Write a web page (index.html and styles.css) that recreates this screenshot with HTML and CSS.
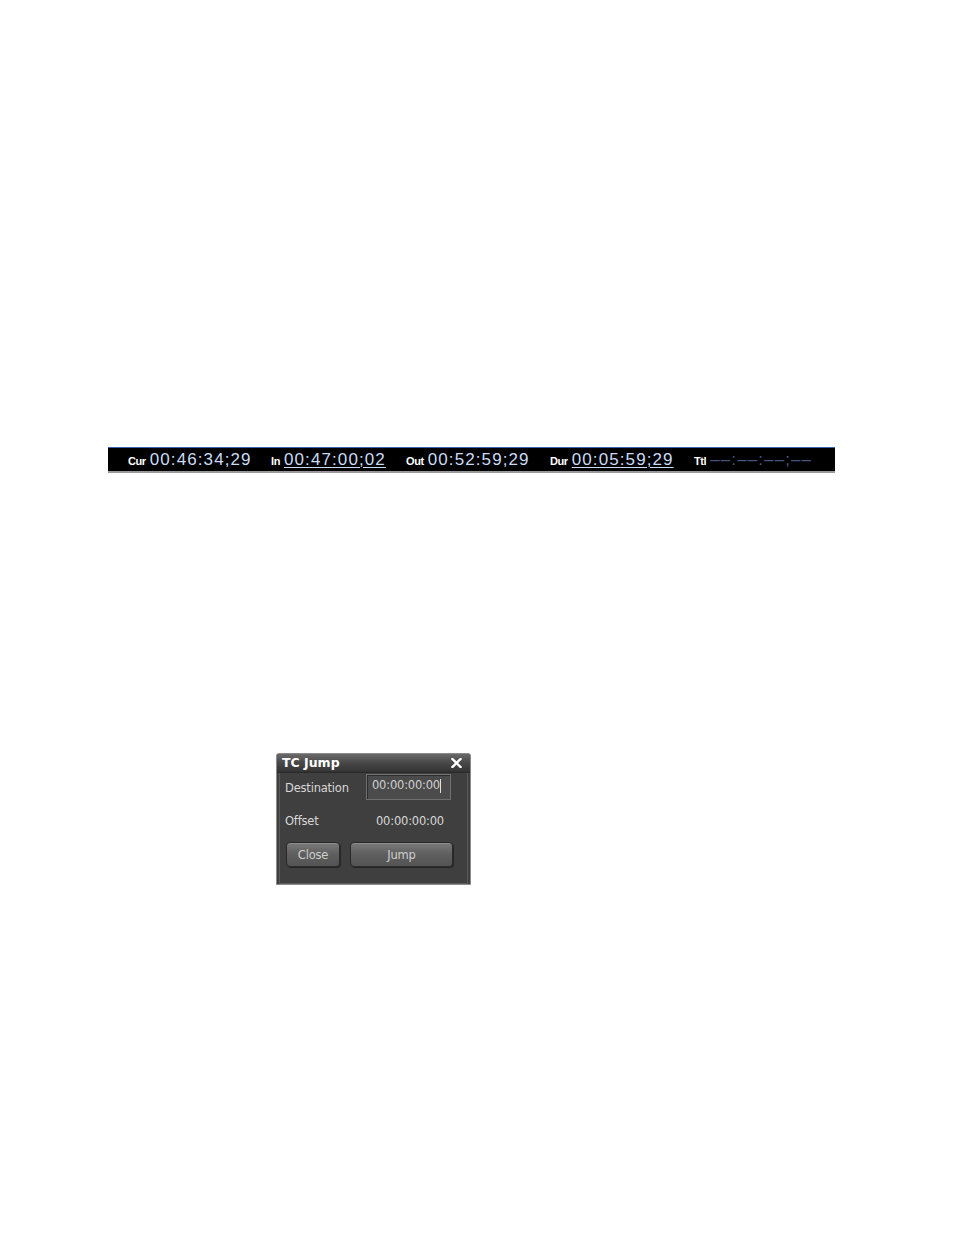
FILE: index.html
```html
<!DOCTYPE html>
<html>
<head>
<meta charset="utf-8">
<link rel="stylesheet" href="styles.css">
</head>
<body>
<div class="page">
  <div class="tcbar">
    <div class="grp g-cur"><span class="lbl">Cur</span><span class="tc">00:46:34;29</span></div>
    <div class="grp g-in"><span class="lbl">In</span><span class="tc ul">00:47:00;02</span></div>
    <div class="grp g-out"><span class="lbl">Out</span><span class="tc">00:52:59;29</span></div>
    <div class="grp g-dur"><span class="lbl">Dur</span><span class="tc ul">00:05:59;29</span></div>
    <div class="grp g-ttl"><span class="lbl">Ttl</span><span class="tc dim">––:––:––;––</span></div>
  </div>

  <div class="dialog">
    <div class="titlebar">
      <span class="title">TC Jump</span>
      <svg class="close-x" width="11" height="10" viewBox="0 0 11 10"><path d="M1.5 1 L9.5 9 M9.5 1 L1.5 9" stroke="#fff" stroke-width="2.4" stroke-linecap="square"/></svg>
    </div>
    <div class="dbody">
      <div class="row r1">
        <span class="dl">Destination</span>
        <div class="input">00:00:00:00<span class="caret"></span></div>
      </div>
      <div class="row r2">
        <span class="dl">Offset</span>
        <span class="val">00:00:00:00</span>
      </div>
      <div class="btns">
        <div class="btn b-close">Close</div>
        <div class="btn b-jump">Jump</div>
      </div>
    </div>
  </div>
</div>
</body>
</html>
```
FILE: styles.css
```css
html, body {
  margin: 0;
  padding: 0;
  background: #fff;
}
.page {
  width: 954px;
  height: 1235px;
  padding-top: 447px;
  box-sizing: border-box;
  font-family: "Liberation Sans", Arial, sans-serif;
}
.tcbar {
  margin-left: 108px;
  width: 727px;
  height: 26px;
  box-sizing: border-box;
  background: #000;
  border-top: 1px solid #3a64b0;
  border-bottom: 2px solid #9a9a9a;
  display: flex;
  align-items: center;
  padding-left: 20px;
}
.grp {
  display: flex;
  align-items: baseline;
  white-space: nowrap;
}
.g-cur { width: 143px; }
.g-in { width: 135px; }
.g-out { width: 144px; }
.g-dur { width: 144px; }
.lbl {
  color: #fff;
  font-size: 11px;
  font-weight: bold;
  letter-spacing: -0.4px;
  margin-right: 4px;
}
.tc {
  color: #c9dcf5;
  font-size: 17px;
  letter-spacing: 1.1px;
  line-height: 20px;
}
.tc.ul {
  text-decoration: underline;
  text-underline-offset: 2px;
  text-decoration-thickness: 1px;
}
.tc.dim {
  color: #44557a;
  letter-spacing: 1.1px;
}

.dialog {
  margin-top: 280px;
  margin-left: 276px;
  width: 195px;
  height: 132px;
  box-sizing: border-box;
  background: #3f3f3f;
  border: 1px solid #8a8a8a;
  border-radius: 3px 3px 0 0;
  font-family: "DejaVu Sans", Verdana, sans-serif;
  overflow: hidden;
}
.titlebar {
  height: 18px;
  background: linear-gradient(#6a6a6a, #4a4a4a 45%, #333 100%);
  border-bottom: 1px solid #2a2a2a;
  display: flex;
  align-items: center;
  justify-content: space-between;
  padding: 0 8px 0 5px;
}
.title {
  color: #fff;
  font-family: "DejaVu Sans", Verdana, sans-serif;
  font-weight: bold;
  font-size: 12.5px;
  letter-spacing: 0;
  margin-top: -1px;
}
.close-x {
  display: block;
}
.dbody {
  height: 111px;
  box-sizing: border-box;
  border: 1px solid #5a5a5a;
  border-top: none;
  margin: 0 2px 2px 2px;
  padding: 1px 0 0 5px;
  position: relative;
}
.row {
  display: flex;
  align-items: center;
  color: #d8d8d8;
  font-size: 11.5px;
  letter-spacing: -0.2px;
}
.r1 { height: 28px; }
.r2 { height: 28px; margin-top: 5px; }
.dl { width: 81px; }
.input {
  width: 85px;
  height: 26px;
  margin-top: -2px;
  box-sizing: border-box;
  background: #4b4b4b;
  border: 1px solid #707070;
  box-shadow: inset 1px 1px 0 #2e2e2e;
  color: #d0d0d0;
  font-size: 11.5px;
  padding-left: 5px;
  padding-bottom: 3px;
  line-height: 21px;
  display: flex;
  align-items: center;
}
.caret {
  display: inline-block;
  width: 1px;
  height: 14px;
  background: #e0e0e0;
}
.val {
  margin-left: 10px;
  color: #d8d8d8;
}
.btns {
  display: flex;
  gap: 10px;
  margin-top: 7px;
  margin-left: 1px;
}
.btn {
  height: 25px;
  box-sizing: border-box;
  border: 1px solid #2a2a2a;
  border-radius: 4px;
  background: linear-gradient(#7a7a7a, #5e5e5e 50%, #545454 100%);
  box-shadow: inset 0 1px 0 #8c8c8c, 1px 1px 0 #262626;
  color: #cfcfcf;
  font-size: 11.5px;
  letter-spacing: -0.2px;
  display: flex;
  align-items: center;
  justify-content: center;
}
.b-close { width: 54px; }
.b-jump { width: 103px; }
```
